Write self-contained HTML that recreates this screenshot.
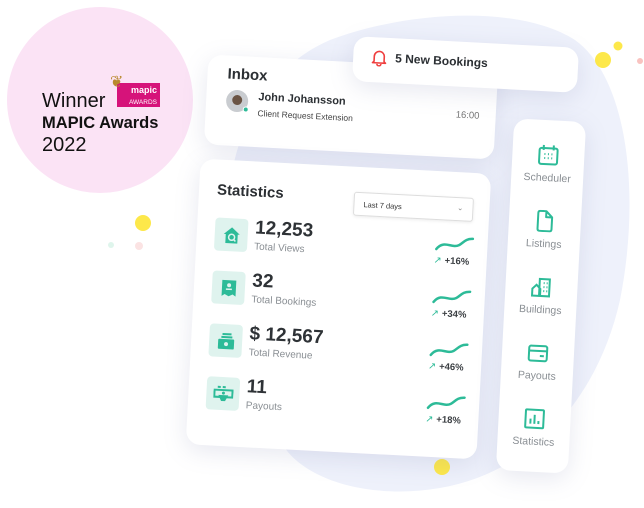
<!DOCTYPE html>
<html><head><meta charset="utf-8"><style>
*{margin:0;padding:0;box-sizing:border-box}
body{width:644px;height:508px;background:#fff;position:relative;overflow:hidden;font-family:"Liberation Sans",sans-serif;color:#2b2f33}
.abs{position:absolute}
.card{position:absolute;background:#fff;border-radius:14px;box-shadow:0 6px 24px rgba(120,130,170,.18);transform:rotate(3deg)}
.ic{position:absolute;left:18px;width:33px;height:33px;background:#dff3ee;border-radius:4px;display:flex;align-items:center;justify-content:center}
.num{position:absolute;left:58px;font-size:19px;font-weight:bold;color:#2e3236}
.lbl{position:absolute;left:58px;font-size:10px;color:#8a8f94}
.pct{position:absolute;font-size:9.5px;font-weight:bold;color:#3a3e42}
.pct b{color:#2dbb98;font-weight:normal;margin-right:3px}
.spark{position:absolute}
.nav{position:absolute;left:0;width:70px;text-align:center;font-size:10.5px;color:#8a8f94}
.nav svg{display:block;margin:0 auto 6px}
</style></head><body>
<svg class="abs" style="left:0;top:0" width="644" height="508">
<path d="M330 40 C410 10 520 5 575 40 C630 80 640 200 620 300 C600 390 540 470 440 488 C370 500 300 480 280 440 C250 380 240 300 230 240 C220 150 260 70 330 40Z" fill="#eef1fb"/>
<circle cx="100" cy="100" r="93" fill="#fbe3f5"/>
<circle cx="143" cy="223" r="8" fill="#fde84a"/>
<circle cx="603" cy="60" r="8" fill="#fde84a"/>
<circle cx="618" cy="46" r="4.5" fill="#fde84a"/>
<circle cx="640" cy="61" r="3" fill="#f9c3c0"/>
<circle cx="442" cy="467" r="8" fill="#fde84a"/>
<circle cx="111" cy="245" r="3" fill="#dff5ec"/>
<circle cx="139" cy="246" r="4" fill="#fbe3e3"/>
</svg>
<div class="abs" style="left:42px;top:90px;font-size:20px;color:#111">Winner</div>
<div class="abs" style="left:117px;top:83px;width:43px;height:24px;background:#d6137a;color:#fff;font-size:9px;font-weight:bold;text-align:right;padding-right:3px;line-height:11px;padding-top:2px">mapic<br><span style="font-weight:normal;font-size:6.5px">AWARDS</span></div>
<div class="abs" style="left:110px;top:72px;font-size:16px;color:#b98a2e">❦</div>
<div class="abs" style="left:42px;top:114px;font-size:16.5px;font-weight:bold;color:#111">MAPIC Awards</div>
<div class="abs" style="left:42px;top:134px;font-size:20px;color:#111">2022</div>

<div class="card" style="left:206px;top:62px;width:290px;height:90px">
 <div class="abs" style="left:20px;top:10px;font-size:15px;font-weight:bold">Inbox</div>
 <div class="abs" style="left:20px;top:34px;width:22px;height:22px;border-radius:50%;background:#c9ccd0;overflow:hidden"><div style="width:10px;height:10px;border-radius:50%;background:#6a5444;margin:5px auto 0"></div></div>
 <div class="abs" style="left:37px;top:50px;width:6px;height:6px;border-radius:50%;background:#2dbb98;border:1px solid #fff"></div>
 <div class="abs" style="left:52px;top:34px;font-size:11px;font-weight:bold">John Johansson</div>
 <div class="abs" style="left:52px;top:51px;font-size:8.5px;color:#444">Client Request Extension</div>
 <div class="abs" style="left:250px;top:42px;font-size:9.5px;color:#777">16:00</div>
</div>

<div class="card" style="left:353px;top:42px;width:225px;height:45px">
 <svg class="abs" style="left:18px;top:12px" width="16" height="17" viewBox="0 0 16 17"><path d="M3 12 V7 a5 5 0 0 1 10 0 V12 L14.5 13.5 H1.5Z M6 14.5 a2 2 0 0 0 4 0" fill="none" stroke="#ef3e3e" stroke-width="1.6" stroke-linejoin="round"/></svg>
 <div class="abs" style="left:42px;top:13px;font-size:12px;font-weight:bold">5 New Bookings</div>
</div>

<div class="card" style="left:193px;top:166px;width:291px;height:286px">
 <div class="abs" style="left:18px;top:22px;font-size:15px;font-weight:bold">Statistics</div>
 <div class="abs" style="left:155px;top:25px;width:120px;height:24px;border:1px solid #ddd;border-radius:3px;box-shadow:0 1px 3px rgba(0,0,0,.08);font-size:7.5px;padding:7px 9px;color:#333">Last 7 days<span style="position:absolute;right:9px;top:5px;color:#888">⌄</span></div>

 <div class="ic" style="top:58px"><svg width="18" height="18" viewBox="0 0 18 18"><path d="M9 1 L17 8 H15 V17 H3 V8 H1Z" fill="#2dbb98"/><circle cx="9" cy="11" r="3" fill="none" stroke="#dff3ee" stroke-width="1.5"/><path d="M11 13 L13 15" stroke="#dff3ee" stroke-width="1.5"/></svg></div>
 <div class="num" style="top:56px">12,253</div><div class="lbl" style="top:80px">Total Views</div>

 <div class="ic" style="top:111px"><svg width="16" height="18" viewBox="0 0 16 18"><path d="M1 1 H15 V17 L12 15 L8 17 L4 15 L1 17Z" fill="#2dbb98"/><circle cx="8" cy="6" r="2" fill="#dff3ee"/><path d="M5 10 H11" stroke="#dff3ee" stroke-width="1.5"/></svg></div>
 <div class="num" style="top:109px">32</div><div class="lbl" style="top:133px">Total Bookings</div>

 <div class="ic" style="top:164px"><svg width="18" height="18" viewBox="0 0 18 18"><rect x="1" y="7" width="16" height="10" rx="1" fill="#2dbb98"/><rect x="5" y="1" width="9" height="2" fill="#2dbb98"/><rect x="4" y="4" width="11" height="2" fill="#2dbb98"/><circle cx="9" cy="12" r="2" fill="#dff3ee"/></svg></div>
 <div class="num" style="top:162px">$ 12,567</div><div class="lbl" style="top:186px">Total Revenue</div>

 <div class="ic" style="top:217px"><svg width="20" height="18" viewBox="0 0 20 18"><path d="M4 2 H7 M9 2 H12" stroke="#2dbb98" stroke-width="2"/><rect x="1" y="5" width="18" height="7" fill="none" stroke="#2dbb98" stroke-width="2"/><path d="M5 10 H15 L12 16 H8Z" fill="#2dbb98"/><circle cx="10" cy="8" r="1.5" fill="#2dbb98"/></svg></div>
 <div class="num" style="top:215px">11</div><div class="lbl" style="top:239px">Payouts</div>

 <svg class="spark" style="left:238px;top:62px" width="40" height="20"><path d="M2 16 C8 8 14 12 20 12 C28 12 28 4 38 4" fill="none" stroke="#2dbb98" stroke-width="2.5" stroke-linecap="round"/></svg>
 <div class="pct" style="left:238px;top:84px"><b>↗</b>+16%</div>
 <svg class="spark" style="left:238px;top:115px" width="40" height="20"><path d="M2 16 C8 8 14 12 20 12 C28 12 28 4 38 4" fill="none" stroke="#2dbb98" stroke-width="2.5" stroke-linecap="round"/></svg>
 <div class="pct" style="left:238px;top:137px"><b>↗</b>+34%</div>
 <svg class="spark" style="left:238px;top:168px" width="40" height="20"><path d="M2 16 C8 8 14 12 20 12 C28 12 28 4 38 4" fill="none" stroke="#2dbb98" stroke-width="2.5" stroke-linecap="round"/></svg>
 <div class="pct" style="left:238px;top:190px"><b>↗</b>+46%</div>
 <svg class="spark" style="left:238px;top:221px" width="40" height="20"><path d="M2 16 C8 8 14 12 20 12 C28 12 28 4 38 4" fill="none" stroke="#2dbb98" stroke-width="2.5" stroke-linecap="round"/></svg>
 <div class="pct" style="left:238px;top:243px"><b>↗</b>+18%</div>
</div>

<div class="card" style="left:505px;top:120px;width:72px;height:352px">
 <div class="nav" style="top:24px;width:72px"><svg width="22" height="22" viewBox="0 0 22 22"><rect x="2" y="4" width="18" height="16" rx="2" fill="none" stroke="#2dbb98" stroke-width="2"/><path d="M6 1 V6 M16 1 V6" stroke="#2dbb98" stroke-width="2"/><path d="M7 10h1M10.5 10h1M14 10h1M7 14h1M10.5 14h1M14 14h1" stroke="#2dbb98" stroke-width="2"/></svg>Scheduler</div>
 <div class="nav" style="top:90px;width:72px"><svg width="22" height="22" viewBox="0 0 22 22"><path d="M4 3 Q4 1 6 1 H12 L18 7 V19 Q18 21 16 21 H6 Q4 21 4 19Z M12 1 V7 H18" fill="none" stroke="#2dbb98" stroke-width="2" stroke-linejoin="round"/></svg>Listings</div>
 <div class="nav" style="top:156px;width:72px"><svg width="22" height="22" viewBox="0 0 22 22"><path d="M9 20 V3 H19 V20Z M2 20 V13 L6 9 L10 13 V20Z" fill="none" stroke="#2dbb98" stroke-width="2"/><path d="M13 7h1M16 7h1M13 11h1M16 11h1M13 15h1M16 15h1" stroke="#2dbb98" stroke-width="2"/></svg>Buildings</div>
 <div class="nav" style="top:222px;width:72px"><svg width="22" height="22" viewBox="0 0 22 22"><rect x="2" y="4" width="18" height="15" rx="2" fill="none" stroke="#2dbb98" stroke-width="2"/><path d="M2 9 H20 M13 14 H17" stroke="#2dbb98" stroke-width="2"/></svg>Payouts</div>
 <div class="nav" style="top:288px;width:72px"><svg width="22" height="22" viewBox="0 0 22 22"><rect x="2" y="2" width="18" height="18" rx="1" fill="none" stroke="#2dbb98" stroke-width="2"/><path d="M7 16 V11 M11 16 V7 M15 16 V13" stroke="#2dbb98" stroke-width="2"/></svg>Statistics</div>
</div>
</body></html>
